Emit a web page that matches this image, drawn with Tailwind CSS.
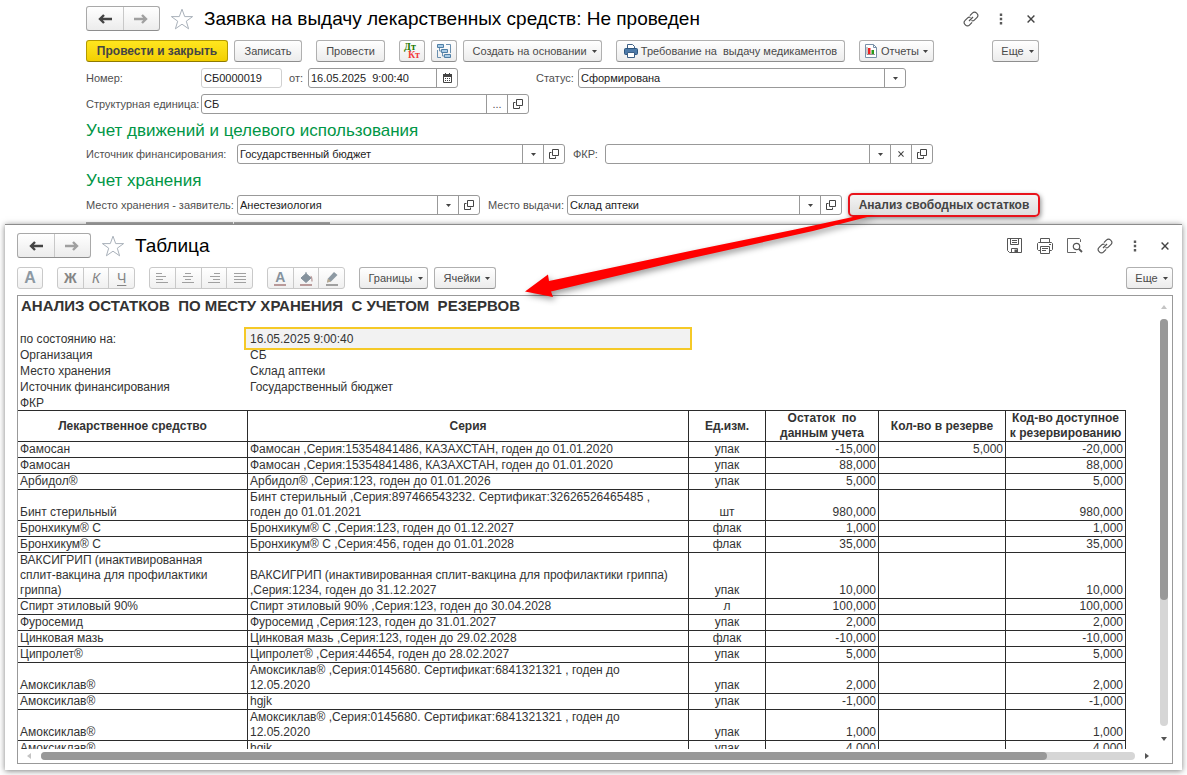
<!DOCTYPE html>
<html lang="ru">
<head>
<meta charset="utf-8">
<title>Заявка на выдачу лекарственных средств</title>
<script src="https://cdn.jsdelivr.net/npm/@tailwindcss/browser@4"></script>
</head>
<body class="relative flex h-screen flex-col overflow-hidden bg-white font-['Liberation_Sans',Arial,sans-serif] text-[11px] leading-4 text-[#4a4a4a]">

<svg class="hidden">
  <symbol id="back" viewBox="0 0 14 10"><path d="M14 5H3M6 1 2 5 6 9" fill="none" stroke="currentColor" stroke-width="2.400"/></symbol>
  <symbol id="fwd" viewBox="0 0 14 10"><path d="M0 5h11M8 1 12 5 8 9" fill="none" stroke="currentColor" stroke-width="2.400"/></symbol>
  <symbol id="star" viewBox="0 0 24 22"><path d="M12 1.2 14.7 8.6H22.6L16.3 13.2 18.6 20.8 12 16.2 5.4 20.8 7.7 13.2 1.4 8.6H9.3Z" fill="none" stroke="#a9b1ba" stroke-width="1"/></symbol>
  <symbol id="link" viewBox="0 0 16 16"><g fill="none" stroke="#555" stroke-width="1.2"><path d="M6.9 4.6 9.6 1.9a2.6 2.6 0 0 1 3.8 0l.7.7a2.6 2.6 0 0 1 0 3.8L11.3 9.2c-.8.8-1.9.9-2.8.4"/><path d="M9.1 11.4 6.4 14.1a2.6 2.6 0 0 1-3.8 0l-.7-.7a2.6 2.6 0 0 1 0-3.8L4.7 6.8c.8-.8 1.9-.9 2.8-.4"/><path d="M6 10 10 6"/></g></symbol>
  <symbol id="dots" viewBox="0 0 4 12"><path d="M.8.5h2.4v2.4H.8zM.8 4.8h2.4v2.4H.8zM.8 9.1h2.4v2.4H.8z" fill="#5a5a5a"/></symbol>
  <symbol id="cross" viewBox="0 0 8 8"><path d="m.6.6 6.8 6.8M7.4.6.6 7.4" stroke="#444" stroke-width="1.4"/></symbol>
  <symbol id="down" viewBox="0 0 5 3"><path d="M0 0h5L2.5 3Z" fill="#444"/></symbol>
  <symbol id="open" viewBox="0 0 10 10"><path d="M3.5.5h6v6h-6zM2.5 3.5h-2v6h6v-2" fill="none" stroke="#444"/></symbol>
</svg>

<main class="shrink-0 pt-[6px] pr-[148px] pl-[86px]">
  <header class="flex h-[25px] items-center">
    <div class="flex h-[25px] w-[74px] rounded-[3px] border border-[#a9a9a9] border-b-[#8e8e8e] bg-linear-to-b from-white to-[#ececec]">
      <button aria-label="Назад" class="flex flex-1 items-center justify-center border-r border-[#c8c8c8] text-[#444]"><svg class="h-[10px] w-[14px]"><use href="#back"/></svg></button>
      <button aria-label="Вперед" class="flex flex-1 items-center justify-center text-[#a0a0a0]"><svg class="h-[10px] w-[14px]"><use href="#fwd"/></svg></button>
    </div>
    <button aria-label="В избранное" class="ml-[10px]"><svg class="h-[22px] w-6"><use href="#star"/></svg></button>
    <h1 class="ml-[10px] text-[19px] leading-6 text-black">Заявка на выдачу лекарственных средств: Не проведен</h1>
    <div class="ml-auto flex items-center pr-[4px]">
      <button aria-label="Ссылка"><svg class="size-4"><use href="#link"/></svg></button>
      <button aria-label="Меню" class="ml-5"><svg class="h-3 w-1"><use href="#dots"/></svg></button>
      <button aria-label="Закрыть" class="ml-6"><svg class="size-2"><use href="#cross"/></svg></button>
    </div>
  </header>

  <div class="mt-[9px] flex h-[22px] [&>button]:flex [&>button]:h-[22px] [&>button]:items-center [&>button]:justify-center [&>button]:rounded-[3px] [&>button]:border [&>button]:whitespace-nowrap">
    <button class="w-[142px] border-[#b39a00] border-b-[#8f7a00] bg-linear-to-b from-[#ffe61e] to-[#f2cf00] text-[12px] font-bold text-[#444]">Провести и закрыть</button>
    <button class="ml-[6px] w-[68px] border-[#b0b0b0] border-b-[#8e8e8e] bg-linear-to-b from-white to-[#ececec]">Записать</button>
    <button class="ml-[14px] w-[69px] border-[#b0b0b0] border-b-[#8e8e8e] bg-linear-to-b from-white to-[#ececec]">Провести</button>
    <button aria-label="Дт Кт" class="ml-[14px] w-[26px] border-[#b0b0b0] border-b-[#8e8e8e] bg-linear-to-b from-white to-[#ececec]">
      <svg class="h-4 w-[18px]" viewBox="0 0 18 16" font-family="Liberation Serif, serif" font-weight="bold" font-size="10"><text x="1" y="7" fill="#1f7a00">Дт</text><text x="5" y="15" fill="#f33a3a">Кт</text></svg>
    </button>
    <button aria-label="Структура подчиненности" class="ml-[6px] w-[26px] border-[#b0b0b0] border-b-[#8e8e8e] bg-linear-to-b from-white to-[#ececec]">
      <svg class="h-4 w-4" viewBox="0 0 16 16"><g fill="#a9cbe6" stroke="#4f7fa6"><path d="M1.500 1.500h6v3h-6zM5.500 6.500h6v3h-6zM8.500 11.500h6v3h-6z"/></g><path d="M3.500 5v3h2M6.500 10v3h2M10 1.500h4.500V10M1.500 7v7.500H5" fill="none" stroke="#6a90b0"/></svg>
    </button>
    <button class="ml-[6px] w-[139px] gap-[5px] border-[#b0b0b0] border-b-[#8e8e8e] bg-linear-to-b from-white to-[#ececec] pl-1">Создать на основании<svg class="h-[3px] w-[5px]"><use href="#down"/></svg></button>
    <button class="ml-[14px] w-[229px] gap-[3px] border-[#b0b0b0] border-b-[#8e8e8e] bg-linear-to-b from-white to-[#ececec]">
      <svg class="size-[14px]" viewBox="0 0 14 14"><path d="M3.500 5V.5h5l2 2V5" fill="#fff" stroke="#3c5f85"/><rect x=".5" y="4.500" width="13" height="6" rx="1" fill="#4d7aa8" stroke="#2f5780"/><path d="M3.500 8.500h7v5h-7z" fill="#fff" stroke="#3c5f85"/></svg><span class="whitespace-pre">Требование на  выдачу медикаментов</span></button>
    <button class="ml-[14px] w-[75px] gap-1 border-[#b0b0b0] border-b-[#8e8e8e] bg-linear-to-b from-white to-[#ececec]">
      <svg class="h-[14px] w-3" viewBox="0 0 12 14"><path d="M.5.5h8l3 3v10H.5z" fill="#fff" stroke="#7890a8"/><path d="M8.500.5v3h3" fill="none" stroke="#7890a8"/><path d="M3 4h2.500v6H3z" fill="#e22"/><path d="M6.500 6H9v4H6.500z" fill="#2a9a1a"/><path d="M2 3v7.500h8" fill="none" stroke="#777" stroke-width=".8"/></svg>Отчеты<svg class="h-[3px] w-[5px]"><use href="#down"/></svg></button>
    <button class="ml-auto w-[47px] gap-[5px] border-[#b0b0b0] border-b-[#8e8e8e] bg-linear-to-b from-white to-[#ececec] pl-1">Еще<svg class="h-[3px] w-[5px]"><use href="#down"/></svg></button>
  </div>

  <form class="text-[#505050] [&_input]:min-w-0 [&_input]:flex-1 [&_input]:px-[2px] [&_input]:text-[#222] [&_input]:outline-none">
    <div class="mt-[6px] flex h-5 items-center">
      <label for="num" class="w-[115px]">Номер:</label>
      <div class="flex h-5 w-[81px] rounded-[3px] border border-[#d0d0d0]"><input id="num" value="СБ0000019"></div>
      <label for="date" class="ml-[7px] w-[19px]">от:</label>
      <div class="flex h-5 w-[150px] rounded-[3px] border border-[#999]">
        <input id="date" value="16.05.2025  9:00:40">
        <button type="button" aria-label="Календарь" class="flex w-[21px] items-center justify-center border-l border-[#999]"><svg class="h-[10px] w-[9px]" viewBox="0 0 9 10"><path d="M.5 1.500h8v8h-8z" fill="none" stroke="#444"/><path d="M0 1h9v3H0zM2 0h1v2H2zM6 0h1v2H6z" fill="#444"/><path d="M2 5h1v1H2zM4 5h1v1H4zM6 5h1v1H6zM2 7h1v1H2zM4 7h1v1H4zM6 7h1v1H6z" fill="#444"/></svg></button>
      </div>
      <label for="status" class="ml-[78px] w-[42px]">Статус:</label>
      <div class="relative h-5 w-[328px] shrink-0 rounded-[3px] border border-[#999]">
        <select id="status" class="h-full w-full appearance-none px-[2px] text-[#222] outline-none"><option>Сформирована</option></select>
        <span class="pointer-events-none absolute inset-y-0 right-0 flex w-[21px] items-center justify-center border-l border-[#999]"><svg class="h-[3px] w-[5px]"><use href="#down"/></svg></span>
      </div>
    </div>

    <div class="mt-[6px] flex h-5 items-center">
      <label for="unit" class="w-[115px] whitespace-nowrap">Структурная единица:</label>
      <div class="flex h-5 w-[328px] rounded-[3px] border border-[#999]">
        <input id="unit" value="СБ">
        <button type="button" class="w-[21px] border-l border-[#999]">...</button>
        <button type="button" aria-label="Открыть" class="flex w-[21px] items-center justify-center border-l border-[#999]"><svg class="size-[10px]"><use href="#open"/></svg></button>
      </div>
    </div>

    <h2 class="mt-[6px] h-[24px] text-[17px] leading-[21px] text-[#009646]">Учет движений и целевого использования</h2>
    <div class="flex h-5 items-center">
      <label for="src" class="w-[151px]">Источник финансирования:</label>
      <div class="flex h-5 w-[328px] rounded-[3px] border border-[#999]">
        <input id="src" value="Государственный бюджет">
        <button type="button" aria-label="Выбрать" class="flex w-[21px] items-center justify-center border-l border-[#999]"><svg class="h-[3px] w-[5px]"><use href="#down"/></svg></button>
        <button type="button" aria-label="Открыть" class="flex w-[21px] items-center justify-center border-l border-[#999]"><svg class="size-[10px]"><use href="#open"/></svg></button>
      </div>
      <label for="fkr" class="ml-[8px] w-[32px]">ФКР:</label>
      <div class="flex h-5 w-[328px] rounded-[3px] border border-[#999]">
        <input id="fkr" value="">
        <button type="button" aria-label="Выбрать" class="flex w-[21px] items-center justify-center border-l border-[#999]"><svg class="h-[3px] w-[5px]"><use href="#down"/></svg></button>
        <button type="button" aria-label="Очистить" class="flex w-[21px] items-center justify-center border-l border-[#999]"><svg class="size-[6px]"><use href="#cross"/></svg></button>
        <button type="button" aria-label="Открыть" class="flex w-[21px] items-center justify-center border-l border-[#999]"><svg class="size-[10px]"><use href="#open"/></svg></button>
      </div>
    </div>

    <h2 class="mt-[6px] h-[25px] text-[17px] leading-[21px] text-[#009646]">Учет хранения</h2>
    <div class="flex h-5 items-center">
      <label for="place" class="w-[151px] shrink-0 whitespace-nowrap">Место хранения - заявитель:</label>
      <div class="flex h-5 w-[243px] shrink-0 rounded-[3px] border border-[#999]">
        <input id="place" value="Анестезиология">
        <button type="button" aria-label="Выбрать" class="flex w-[21px] items-center justify-center border-l border-[#999]"><svg class="h-[3px] w-[5px]"><use href="#down"/></svg></button>
        <button type="button" aria-label="Открыть" class="flex w-[21px] items-center justify-center border-l border-[#999]"><svg class="size-[10px]"><use href="#open"/></svg></button>
      </div>
      <label for="issue" class="ml-[8px] w-[79px] shrink-0 whitespace-nowrap">Место выдачи:</label>
      <div class="flex h-5 w-[275px] shrink-0 rounded-[3px] border border-[#999]">
        <input id="issue" value="Склад аптеки">
        <button type="button" aria-label="Выбрать" class="flex w-[21px] items-center justify-center border-l border-[#999]"><svg class="h-[3px] w-[5px]"><use href="#down"/></svg></button>
        <button type="button" aria-label="Открыть" class="flex w-[21px] items-center justify-center border-l border-[#999]"><svg class="size-[10px]"><use href="#open"/></svg></button>
      </div>
      <button type="button" class="ml-[6px] h-6 w-[192px] shrink-0 rounded-[5px] border-2 border-[#e8141c] bg-linear-to-b from-[#f4f4f4] to-[#dedede] text-[12px] font-bold whitespace-nowrap text-[#444] shadow-[1px_2px_5px_rgba(0,0,0,0.45)]">Анализ свободных остатков</button>
    </div>
  </form>
  <div class="mt-[7px] flex h-[2px] gap-px"><i class="w-[147px] bg-[#aaa]"></i><i class="w-[96px] bg-[#aaa]"></i></div>
</main>

<section class="relative mx-[5px] mb-[5px] flex min-h-0 flex-1 flex-col border-t border-[#8c8c8c] bg-white pt-[8px] pr-[9px] pb-[6px] pl-3 shadow-[0_1px_6px_rgba(0,0,0,0.5)]">
  <header class="flex h-[25px] shrink-0 items-center">
    <div class="flex h-[25px] w-[74px] rounded-[3px] border border-[#a9a9a9] border-b-[#8e8e8e] bg-linear-to-b from-white to-[#ececec]">
      <button aria-label="Назад" class="flex flex-1 items-center justify-center border-r border-[#c8c8c8] text-[#444]"><svg class="h-[10px] w-[14px]"><use href="#back"/></svg></button>
      <button aria-label="Вперед" class="flex flex-1 items-center justify-center text-[#a0a0a0]"><svg class="h-[10px] w-[14px]"><use href="#fwd"/></svg></button>
    </div>
    <button aria-label="В избранное" class="ml-[10px]"><svg class="h-[22px] w-6"><use href="#star"/></svg></button>
    <h2 class="ml-[10px] text-[19px] leading-6 text-black">Таблица</h2>
    <div class="ml-auto flex items-center pr-[4px]">
      <button aria-label="Сохранить"><svg class="size-[15px]" viewBox="0 0 15 15"><path d="M.5.5h14v14h-12l-2-2zM3.500.5v6h8v-6M5 2.500h5M5 4.500h5M4.500 14.500v-4h6v4" fill="none" stroke="#555"/><path d="M7.500 11.500H10v3H7.500z" fill="#555"/></svg></button>
      <button aria-label="Печать" class="ml-[15px]"><svg class="size-4" viewBox="0 0 16 16"><path d="M3.500 4.500v-4h9v4M3.500 12.500h-2l-1-1v-6l1-1h13l1 1v6l-1 1h-2M3.500 8.500h9v7h-9zM5 10.500h6M5 12.500h4M12 6.500h2" fill="none" stroke="#555"/></svg></button>
      <button aria-label="Просмотр" class="ml-[14px]"><svg class="h-[15px] w-4" viewBox="0 0 16 15"><path d="M13.500 4V1.500l-1-1H.5v14H9" fill="none" stroke="#666"/><circle cx="9.500" cy="8.500" r="3.200" fill="none" stroke="#555" stroke-width="1.200"/><path d="m12 11 3 3" stroke="#555" stroke-width="1.800"/></svg></button>
      <button aria-label="Ссылка" class="ml-[14px]"><svg class="size-4"><use href="#link"/></svg></button>
      <button aria-label="Меню" class="ml-5"><svg class="h-3 w-1"><use href="#dots"/></svg></button>
      <button aria-label="Закрыть" class="ml-6"><svg class="size-2"><use href="#cross"/></svg></button>
    </div>
  </header>

  <div class="mt-[9px] flex h-[22px] shrink-0 [&>div]:flex [&>div]:rounded-[3px] [&>div]:border [&>div]:border-[#c9c9c9] [&>div]:bg-linear-to-b [&>div]:from-white [&>div]:to-[#f0f0f0] [&>div>button]:flex [&>div>button]:flex-1 [&>div>button]:items-center [&>div>button]:justify-center [&>div>button+button]:border-l [&>div>button+button]:border-[#c9c9c9]">
    <div class="w-[26px]"><button class="text-[16px] font-bold text-[#8d99a3]">A</button></div>
    <div class="ml-[14px] w-[78px] text-[14px] text-[#858585]"><button class="font-bold">Ж</button><button class="italic">К</button><button class="underline underline-offset-2">Ч</button></div>
    <div class="ml-[14px] w-[104px]">
      <button aria-label="По левому краю"><svg class="h-3 w-3" viewBox="0 0 12 12"><path d="M0 1.500h6M0 4.500h10M0 7.500h7M0 10.500h12" stroke="#a0a0a0"/></svg></button>
      <button aria-label="По центру"><svg class="h-3 w-3" viewBox="0 0 12 12"><path d="M3 1.500h6M1 4.500h10M3 7.500h6M0 10.500h12" stroke="#a0a0a0"/></svg></button>
      <button aria-label="По правому краю"><svg class="h-3 w-3" viewBox="0 0 12 12"><path d="M6 1.500h6M2 4.500h10M5 7.500h7M0 10.500h12" stroke="#a0a0a0"/></svg></button>
      <button aria-label="По ширине"><svg class="h-3 w-3" viewBox="0 0 12 12"><path d="M0 1.500h12M0 4.500h12M0 7.500h12M0 10.500h12" stroke="#a0a0a0"/></svg></button>
    </div>
    <div class="ml-[14px] w-[78px]">
      <button aria-label="Цвет текста"><span class="h-[15px] w-3 border-b-2 border-[#b99a9a] text-[14px] leading-[13px] font-bold text-[#85929d]">A</span></button>
      <button aria-label="Цвет фона"><svg class="h-[15px] w-[13px]" viewBox="0 0 13 15"><path d="M6 1v3M1 7l5-4.500L11 7 6 11.500Z" fill="#85929d" stroke="#85929d"/><path d="M10.500 5.500c1.500 0 1.500 2 1.500 5" fill="none" stroke="#b99a9a" stroke-width="1.300"/><path d="M0 14h12" stroke="#b99a9a" stroke-width="2"/></svg></button>
      <button aria-label="Цвет рамки"><svg class="h-[15px] w-3" viewBox="0 0 12 15"><path d="M1 11.500 2 7.500 8 1l3.500 3L5 10.500Z" fill="#8d99a3"/><path d="m1 11.500 1-4L5 10.500Z" fill="#b9aa90"/><path d="M0 14h12" stroke="#a0a0a0" stroke-width="2"/></svg></button>
    </div>
    <button class="ml-[14px] flex w-[69px] items-center justify-center gap-[5px] rounded-[3px] border border-[#b0b0b0] border-b-[#8e8e8e] bg-linear-to-b from-white to-[#ececec] pl-1">Границы<svg class="h-[3px] w-[5px]"><use href="#down"/></svg></button>
    <button class="ml-[6px] flex w-[62px] items-center justify-center gap-[5px] rounded-[3px] border border-[#b0b0b0] border-b-[#8e8e8e] bg-linear-to-b from-white to-[#ececec] pl-1">Ячейки<svg class="h-[3px] w-[5px]"><use href="#down"/></svg></button>
    <button class="ml-auto flex w-[47px] items-center justify-center gap-[5px] rounded-[3px] border border-[#b0b0b0] border-b-[#8e8e8e] bg-linear-to-b from-white to-[#ececec] pl-1">Еще<svg class="h-[3px] w-[5px]"><use href="#down"/></svg></button>
  </div>

  <div class="mt-[6px] flex min-h-0 flex-1 flex-col border border-[#999]">
    <div class="flex min-h-0 flex-1">
      <div class="min-w-0 flex-1 overflow-hidden text-[12px] leading-[15px] text-[#333]">
        <h3 class="mb-[14px] pl-[3px] text-[15px] leading-5 font-bold whitespace-pre">АНАЛИЗ ОСТАТКОВ  ПО МЕСТУ ХРАНЕНИЯ  С УЧЕТОМ  РЕЗЕРВОВ</h3>
        <dl class="grid auto-rows-[16px] grid-cols-[230px_441px] leading-[18px] [&>*]:pl-[2px]">
          <dt>по состоянию на:</dt><dd class="relative"><span class="absolute -top-[3px] right-[-3px] -bottom-1 -left-1 border-2 border-[#f5c927] bg-[#f2f2f2] pl-1 leading-5">16.05.2025 9:00:40</span></dd>
          <dt>Организация</dt><dd>СБ</dd>
          <dt>Место хранения</dt><dd>Склад аптеки</dd>
          <dt>Источник финансирования</dt><dd>Государственный бюджет</dd>
          <dt>ФКР</dt><dd></dd>
        </dl>
        <table class="w-[1108px] table-fixed border-separate border-spacing-0 border-t border-[#2b2b2b] [&_td]:border-r [&_td]:border-b [&_td]:border-[#2b2b2b] [&_td]:px-[2px] [&_td]:align-bottom [&_td:nth-child(3)]:text-center [&_td:nth-child(n+4)]:text-right [&_th]:border-r [&_th]:border-b [&_th]:border-[#2b2b2b] [&_th]:whitespace-pre">
          <colgroup><col class="w-[230px]"><col class="w-[441px]"><col class="w-[77px]"><col class="w-[113px]"><col class="w-[127px]"><col class="w-[120px]"></colgroup>
          <thead><tr><th>Лекарственное средство</th><th>Серия</th><th>Ед.изм.</th><th>Остаток  по<br>данным учета</th><th>Кол-во в резерве</th><th>Код-во доступное<br>к резервированию</th></tr></thead>
          <tbody>
            <tr><td>Фамосан</td><td>Фамосан ,Серия:15354841486, КАЗАХСТАН, годен до 01.01.2020</td><td>упак</td><td>-15,000</td><td>5,000</td><td>-20,000</td></tr>
            <tr><td>Фамосан</td><td>Фамосан ,Серия:15354841486, КАЗАХСТАН, годен до 01.01.2020</td><td>упак</td><td>88,000</td><td></td><td>88,000</td></tr>
            <tr><td>Арбидол®</td><td>Арбидол® ,Серия:123, годен до 01.01.2026</td><td>упак</td><td>5,000</td><td></td><td>5,000</td></tr>
            <tr><td>Бинт стерильный</td><td>Бинт стерильный ,Серия:897466543232. Сертификат:32626526465485 ,<br>годен до 01.01.2021</td><td>шт</td><td>980,000</td><td></td><td>980,000</td></tr>
            <tr><td>Бронхикум® С</td><td>Бронхикум® С ,Серия:123, годен до 01.12.2027</td><td>флак</td><td>1,000</td><td></td><td>1,000</td></tr>
            <tr><td>Бронхикум® С</td><td>Бронхикум® С ,Серия:456, годен до 01.01.2028</td><td>флак</td><td>35,000</td><td></td><td>35,000</td></tr>
            <tr><td>ВАКСИГРИП (инактивированная<br>сплит-вакцина для профилактики<br>гриппа)</td><td>ВАКСИГРИП (инактивированная сплит-вакцина для профилактики гриппа)<br>,Серия:1234, годен до 31.12.2027</td><td>упак</td><td>10,000</td><td></td><td>10,000</td></tr>
            <tr><td>Спирт этиловый 90%</td><td>Спирт этиловый 90% ,Серия:123, годен до 30.04.2028</td><td>л</td><td>100,000</td><td></td><td>100,000</td></tr>
            <tr><td>Фуросемид</td><td>Фуросемид ,Серия:123, годен до 31.01.2027</td><td>упак</td><td>2,000</td><td></td><td>2,000</td></tr>
            <tr><td>Цинковая мазь</td><td>Цинковая мазь ,Серия:123, годен до 29.02.2028</td><td>флак</td><td>-10,000</td><td></td><td>-10,000</td></tr>
            <tr><td>Ципролет®</td><td>Ципролет® ,Серия:44654, годен до 28.02.2027</td><td>упак</td><td>5,000</td><td></td><td>5,000</td></tr>
            <tr><td>Амоксиклав®</td><td>Амоксиклав® ,Серия:0145680. Сертификат:6841321321 , годен до<br>12.05.2020</td><td>упак</td><td>2,000</td><td></td><td>2,000</td></tr>
            <tr><td>Амоксиклав®</td><td>hgjk</td><td>упак</td><td>-1,000</td><td></td><td>-1,000</td></tr>
            <tr><td>Амоксиклав®</td><td>Амоксиклав® ,Серия:0145680. Сертификат:6841321321 , годен до<br>12.05.2020</td><td>упак</td><td>1,000</td><td></td><td>1,000</td></tr>
            <tr><td>Амоксиклав®</td><td>hgjk</td><td>упак</td><td>4,000</td><td></td><td>4,000</td></tr>
          </tbody>
        </table>
      </div>
      <div class="flex w-4 shrink-0 flex-col items-center pt-[9px] pb-[8px]">
        <svg class="h-1 w-[6px] shrink-0" viewBox="0 0 6 4"><path d="M0 4h6L3 0Z" fill="#c4c4c4"/></svg>
        <div class="mt-[10px] mb-[11px] min-h-0 w-2 flex-1 rounded-full bg-[#d6d6d6]"><div class="h-[69%] rounded-full bg-[#999]"></div></div>
        <svg class="h-1 w-[6px] shrink-0" viewBox="0 0 6 4"><path d="M0 0h6L3 4Z" fill="#555"/></svg>
      </div>
    </div>
    <div class="flex h-[14px] shrink-0 items-center pr-[23px] pl-[9px]">
      <svg class="h-[6px] w-1" viewBox="0 0 4 6"><path d="M4 0v6L0 3Z" fill="#c4c4c4"/></svg>
      <div class="mx-[10px] h-2 flex-1 rounded-full bg-[#d6d6d6]"><div class="h-2 w-[92%] rounded-full bg-[#999]"></div></div>
      <svg class="h-[6px] w-1" viewBox="0 0 4 6"><path d="M0 0v6l4-3Z" fill="#555"/></svg>
    </div>
  </div>
</section>

<svg class="pointer-events-none absolute top-[210px] left-[515px] h-[100px] w-[370px] drop-shadow-[2px_3px_3px_rgba(0,0,0,0.4)]" viewBox="515 210 370 100"><path d="M525 291.500 548 274.500 549 281 690 251 795 229.500 862 215H875L813 231 690 258.500 551 291.500 553 297Z" fill="#f00"/></svg>
</body>
</html>
